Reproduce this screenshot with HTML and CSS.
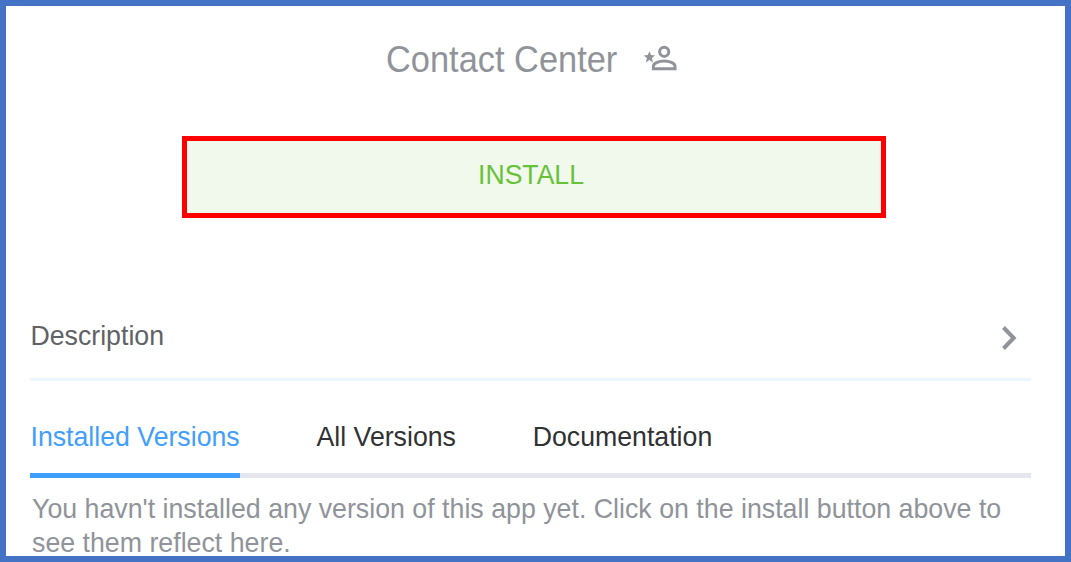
FILE: index.html
```html
<!DOCTYPE html>
<html lang="en">
<head>
<meta charset="utf-8">
<title>Contact Center</title>
<link rel="stylesheet" href="styles.css">
</head>
<body>
<main class="panel">
  <header class="header">
    <h1 class="title">Contact Center</h1>
    <svg class="contact-icon" viewBox="0 0 34 28" aria-hidden="true">
      <path class="star" d="M5.4 5.2 7 9.1 11.1 9.4 7.9 12.1 9 16.4 5.4 14 1.8 16.4 2.9 12.1 -.3 9.4 3.8 9.1Z"/>
      <circle class="outline" cx="20.2" cy="5.8" r="4.6"/>
      <path class="outline" d="M9.4 22.7V20.3C9.4 17 15.4 15 20.2 15S31 17 31 20.3V22.7Z"/>
    </svg>
  </header>
  <button class="install"><span class="label">INSTALL</span></button>
  <section class="description">
    <span class="label">Description</span>
    <svg class="chevron" viewBox="0 0 16 26" aria-hidden="true"><path d="M2.5 2.5 12.7 13 2.5 23.5"/></svg>
  </section>
  <nav class="tabs">
    <a class="tab active"><span class="label">Installed Versions</span></a>
    <a class="tab"><span class="label">All Versions</span></a>
    <a class="tab"><span class="label">Documentation</span></a>
  </nav>
  <p class="message">You havn't installed any version of this app yet. Click on the install button above to see them reflect here.</p>
</main>
</body>
</html>
```
FILE: styles.css
```css
* { box-sizing: border-box; }
body {
  margin: 0;
  font-family: "Liberation Sans", Arial, sans-serif;
  font-size: 26.7px;
}
.panel {
  width: 1071px;
  height: 562px;
  padding: 0 34px 0 24px;
  border: 6px solid #4472c4;
  background: #fff;
  overflow: hidden;
}
.label { display: inline-block; transform: scaleY(1.04); }
.header {
  display: flex;
  align-items: center;
  height: 107px;
  margin-left: 356px;
  gap: 26.4px;
}
.title {
  margin: 0;
  color: #909399;
  font-size: 34.4px;
  font-weight: 400;
  transform: scaleY(1.07);
}
.contact-icon { width: 34px; height: 28px; overflow: visible; }
.star { fill: #909399; }
.outline { fill: none; stroke: #909399; stroke-width: 3; }
.install {
  display: block;
  width: 704px;
  height: 82px;
  margin: 23px 0 0 152px;
  padding: 0 6px 4px 0;
  border: 5px solid #f00;
  background: #f0f9eb;
  color: #67c23a;
  font: inherit;
  font-size: 26.6px;
}
.description {
  display: flex;
  align-items: center;
  justify-content: space-between;
  height: 88px;
  margin-top: 75px;
  padding: 2px 14px 0 0.5px;
  border-bottom: 3px solid #ecf5ff;
  color: #606266;
}
.chevron {
  width: 16px;
  height: 26px;
  margin-top: 2px;
  fill: none;
  stroke: #909399;
  stroke-width: 4;
}
.tabs {
  display: flex;
  height: 97px;
  gap: 76.8px;
  color: #303133;
  box-shadow: inset 0 -5px #e4e7ed;
}
.tab {
  display: flex;
  align-items: center;
  padding-top: 20px;
  border-bottom: 5px solid transparent;
}
.active { padding-left: 0.5px; color: #409eff; border-color: #409eff; }
.message {
  margin: 15px -10px 0 2px;
  color: #909399;
  font-size: 26.75px;
  line-height: 33.5px;
}
```
